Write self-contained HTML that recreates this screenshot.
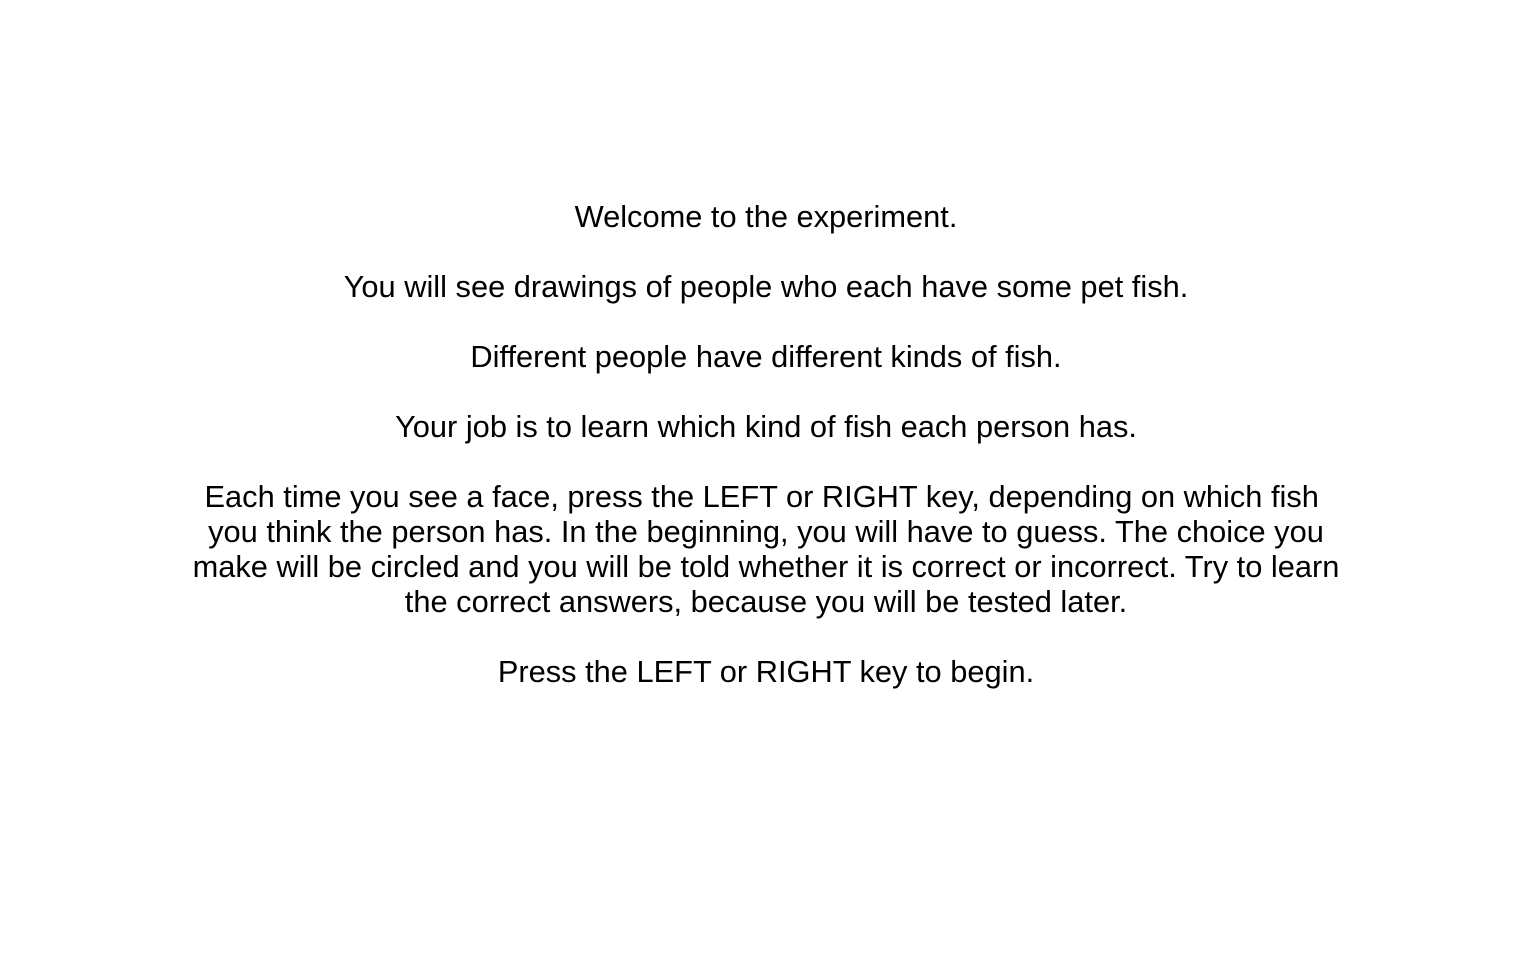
<!DOCTYPE html>
<html><head><meta charset="utf-8">
<style>
html,body{margin:0;padding:0;background:#fff;width:1532px;height:953px;overflow:hidden;}
.c{position:absolute;top:199px;left:0;width:1532px;text-align:center;font-family:"Liberation Sans",Arial,sans-serif;font-size:30.8px;line-height:35px;color:#000;}
p{margin:0 0 35px 0;white-space:nowrap;}
</style></head><body>
<div class="c">
<p>Welcome to the experiment.</p>
<p>You will see drawings of people who each have some pet fish.</p>
<p>Different people have different kinds of fish.</p>
<p>Your job is to learn which kind of fish each person has.</p>
<p>Each time you see a face, press the LEFT or RIGHT key, depending on which fish&nbsp;<br>you think the person has. In the beginning, you will have to guess. The choice you<br>make will be circled and you will be told whether it is correct or incorrect. Try to learn<br>the correct answers, because you will be tested later.</p>
<p>Press the LEFT or RIGHT key to begin.</p>
</div>
</body></html>
